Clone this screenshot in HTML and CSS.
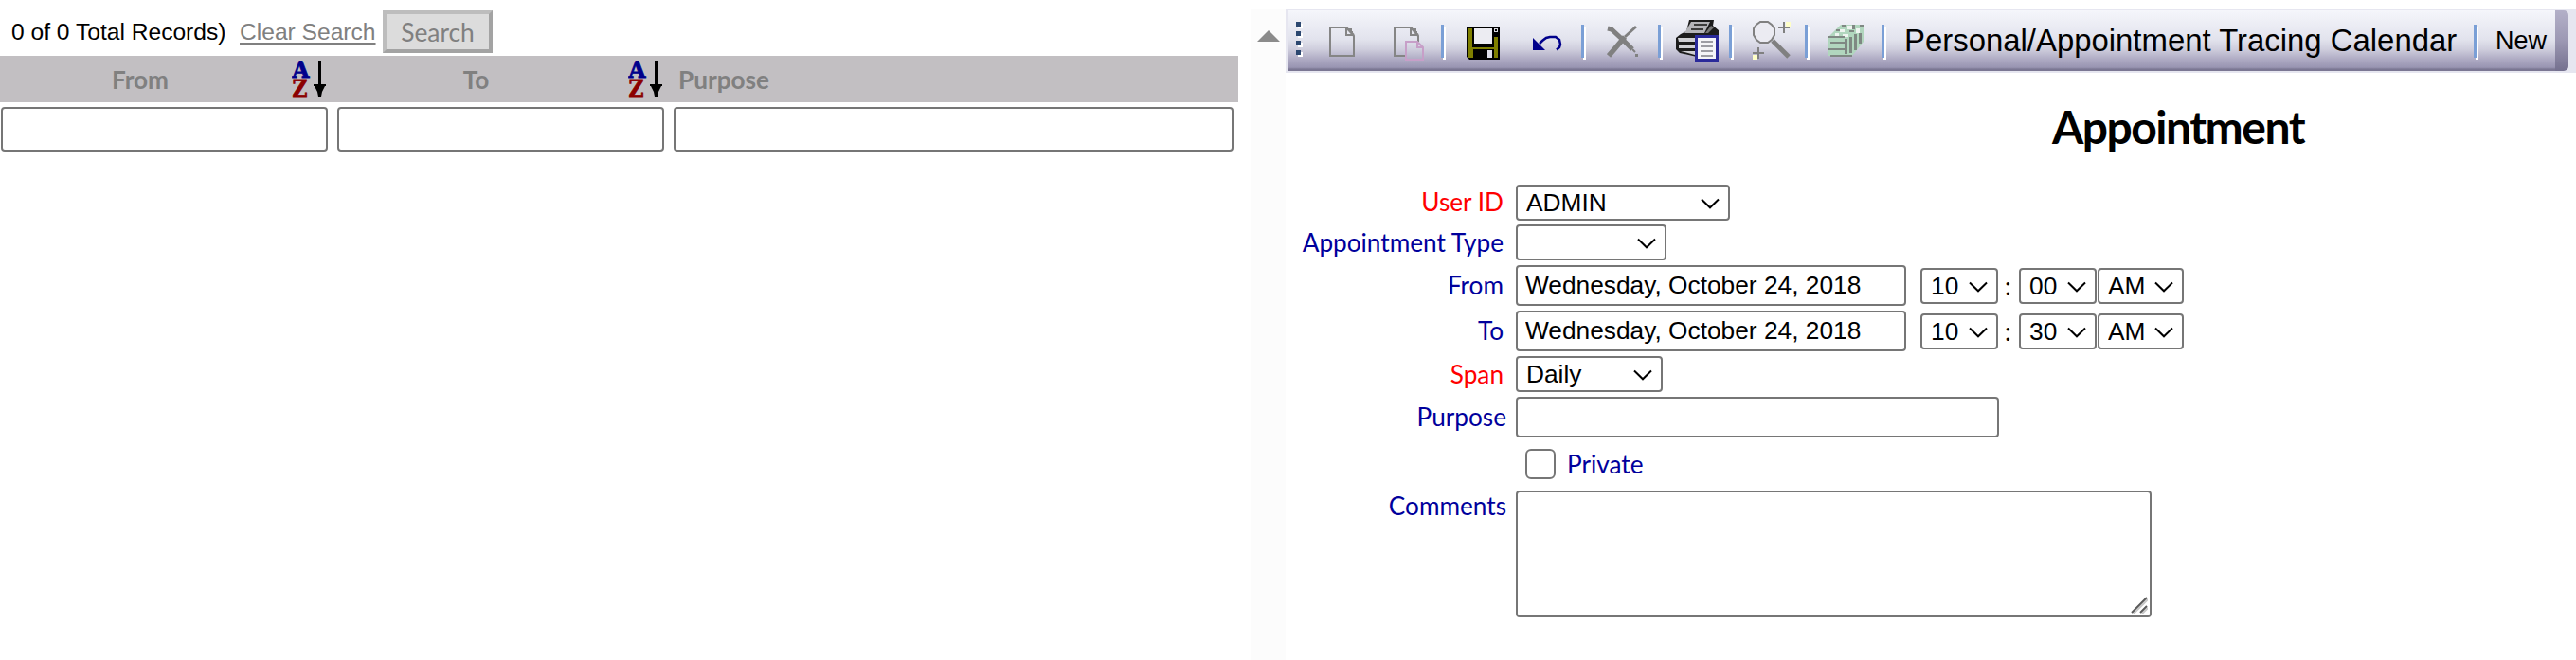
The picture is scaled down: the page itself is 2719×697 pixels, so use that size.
FILE: index.html
```html
<!DOCTYPE html>
<html lang="en">
<head>
  <meta charset="UTF-8" />
  <title>Appointment</title>
  <link rel="stylesheet" href="styles.css">
</head>
<body>
  <!-- Record list -->
  <div class="list">
    <div class="summary">
      <span class="total">0 of 0 Total Records)</span>
      <a class="clear" href="#">Clear Search</a>
      <button class="search">Search</button>
    </div>
    <div class="columns">
      <div class="column from">
        <span>From</span>
        <svg class="sort" viewBox="0 0 36 39">
          <text class="sort-a" x="0.5" y="18" textLength="18" lengthAdjust="spacingAndGlyphs">A</text>
          <text class="sort-z" x="0.5" y="38" textLength="16" lengthAdjust="spacingAndGlyphs">Z</text>
          <path d="M28 0h3v25h5v2h-1l-3 6-1 5h-3l-1-5-3-6h-1v-2h5z" />
        </svg>
      </div>
      <div class="column to">
        <span>To</span>
        <svg class="sort" viewBox="0 0 36 39">
          <text class="sort-a" x="0.5" y="18" textLength="18" lengthAdjust="spacingAndGlyphs">A</text>
          <text class="sort-z" x="0.5" y="38" textLength="16" lengthAdjust="spacingAndGlyphs">Z</text>
          <path d="M28 0h3v25h5v2h-1l-3 6-1 5h-3l-1-5-3-6h-1v-2h5z" />
        </svg>
      </div>
      <div class="column purpose"><span>Purpose</span></div>
    </div>
    <div class="filters">
      <input type="text" class="from" />
      <input type="text" class="to" />
      <input type="text" class="purpose" />
    </div>
  </div>

  <div class="scrollbar">
    <svg width="24" height="12" viewBox="0 0 24 12"><path d="M12 0l12 12H0z" fill="#8b8b8b" /></svg>
  </div>

  <!-- Appointment detail -->
  <div class="detail">
    <div class="toolbar">
      <div class="tools">
        <svg class="grip" width="8" height="44" viewBox="0 0 8 44">
          <path d="M2 4h5v5H2zM2 14h5v5H2zM2 24h5v5H2zM2 34h5v5H2z" fill="#fff" />
          <path d="M0 2h5v5H0zM0 12h5v5H0zM0 22h5v5H0zM0 32h5v5H0z" fill="#2c4870" />
        </svg>
        <svg class="new" width="27" height="44" viewBox="0 0 27 44" fill="none" stroke="#858585" stroke-width="2">
          <path d="M1 8h17l8 9v21H1z" />
          <path d="M18 8v8h8M18 8l8 8" />
          <path d="M20 10h3v3h2" />
        </svg>
        <svg class="copy" width="32" height="44" viewBox="0 0 32 44" fill="none" stroke="#858585" stroke-width="2">
          <path d="M13 38H1V8h17l8 9v6" />
          <path d="M18 8v8h8M18 8l8 8M20 10h3v3h2" />
          <path d="M13 23h12l6 6v13H13z" stroke="#c79fc8" />
          <path d="M25 23v6h6" stroke="#c79fc8" />
        </svg>
        <i class="sep after-copy"></i>
        <svg class="save" width="35" height="44" viewBox="0 0 35 44">
          <path d="M0 7h35v35H3l-3-3z" />
          <path d="M2 9h4v20h23V18h4v22h-4v-9H7v9H2z" fill="#808000" />
          <path d="M8 9h19v16H8z" fill="#ececf2" />
          <path d="M29 9h4v4h-4z" fill="#d6d6de" />
          <path d="M30 10h2v2h-2z" />
          <path d="M22 32h5v8h-5z" fill="#dedee8" />
        </svg>
        <svg class="undo" width="31" height="44" viewBox="0 0 31 44" fill="none" stroke="#00008b" stroke-width="2.5">
          <path d="M0 19v13h13z" fill="#00008b" stroke="none" />
          <path d="M7 25l3-3 4-3 4-1h6l4 3 1 5-1 3-3 2.5" />
        </svg>
        <i class="sep after-undo"></i>
        <svg class="delete" width="33" height="44" viewBox="0 0 33 44" fill="none" stroke="#808080">
          <path d="M1 9l4 1 14 13 8 8" stroke-width="5" />
          <path d="M27 31l3 3" stroke-width="2" />
          <path d="M31 7L19 18" stroke-width="3" />
          <path d="M19 18L8 31l-6 7" stroke-width="5.5" />
          <path d="M30 36h3v3h-3z" fill="#808080" stroke="none" />
        </svg>
        <i class="sep after-delete"></i>
        <svg class="print" width="45" height="44" viewBox="0 0 45 44">
          <path d="M14 0h26l-1 6 6 5v20L22 39 4 35l-4-4V19l5-4 6-3z" fill="#1c1c1c" />
          <path d="M16 2h20l-6 12H9z" fill="#b4b4b8" />
          <path d="M19 5h14M16 10h13" stroke="#3c3c3c" stroke-width="2" />
          <path d="M2 19h18v4H3zM3 26h17v4H3zM5 33h15v4z" fill="#cfcfd3" />
          <path d="M31 14l6-8 3 2-6 6z" fill="#777" />
          <path d="M21.5 17.5h22v25h-22z" fill="#f4f4f8" stroke="#2a2a9a" stroke-width="3" />
          <path d="M26 23h13M26 28h13M26 33h13M26 38h13" stroke="#9c9ca4" stroke-width="2" />
        </svg>
        <i class="sep after-print"></i>
        <svg class="find" width="40" height="44" viewBox="0 0 40 44" fill="none" stroke="#808080" stroke-width="2">
          <path d="M8 2h8l4 3 3 4v7l-3 5-4 3H8l-4-3-3-5V9l3-4z" fill="#ebebf2" />
          <path d="M21 22l17 17" stroke-width="5" />
          <path d="M33 2v12M27 8h12M6 29v12M0 35h12" />
          <path d="M35 2h5v5h-5zM0 37h5v5H0z" fill="#ffffc8" stroke="none" />
        </svg>
        <i class="sep after-find"></i>
        <svg class="money" width="37" height="44" viewBox="0 0 37 44">
          <path d="M0 18L13 5h24v18L25 38H0z" fill="#b1d6be" />
          <path d="M12 10h5v3h-5zM20 6h5v4h-5zM29 9h4v5h-4zM15 15h6v3h-6zM7 14h4v3H7z" fill="#eef4f0" />
          <path d="M0 17h17v2H0zM2 23h16v2H2zM0 30h17v2H0zM2 37h23v2H2zM17 20h3v16h-3zM22 18h3v17h-3zM27 15h3v17h-3zM32 14h3v11h-3zM8 10h4v2H8zM14 5h5v2h-5zM22 11h5v2h-5zM25 5h3v5h-3zM33 5h4v2h-4z" fill="#7f8883" />
        </svg>
        <i class="sep after-money"></i>
        <span class="caption">Personal/Appointment Tracing Calendar</span>
        <i class="sep"></i>
        <span class="mode">New</span>
      </div>
      <div class="cap"></div>
    </div>

    <h1>Appointment</h1>

    <form class="form">
      <label class="required">User ID</label>
      <div class="row">
        <div class="select user"><select><option>ADMIN</option></select><svg viewBox="0 0 20 12"><path d="M1 1.5l9 8.8 9-8.8" /></svg></div>
      </div>

      <label>Appointment Type</label>
      <div class="row">
        <div class="select type"><select><option></option></select><svg viewBox="0 0 20 12"><path d="M1 1.5l9 8.8 9-8.8" /></svg></div>
      </div>

      <label>From</label>
      <div class="row">
        <input type="text" class="date" value="Wednesday, October 24, 2018" />
        <div class="select hour"><select><option>10</option></select><svg viewBox="0 0 20 12"><path d="M1 1.5l9 8.8 9-8.8" /></svg></div>
        <span class="colon">:</span>
        <div class="select minute"><select><option>00</option></select><svg viewBox="0 0 20 12"><path d="M1 1.5l9 8.8 9-8.8" /></svg></div>
        <div class="select ampm"><select><option>AM</option></select><svg viewBox="0 0 20 12"><path d="M1 1.5l9 8.8 9-8.8" /></svg></div>
      </div>

      <label>To</label>
      <div class="row">
        <input type="text" class="date" value="Wednesday, October 24, 2018" />
        <div class="select hour"><select><option>10</option></select><svg viewBox="0 0 20 12"><path d="M1 1.5l9 8.8 9-8.8" /></svg></div>
        <span class="colon">:</span>
        <div class="select minute"><select><option>30</option></select><svg viewBox="0 0 20 12"><path d="M1 1.5l9 8.8 9-8.8" /></svg></div>
        <div class="select ampm"><select><option>AM</option></select><svg viewBox="0 0 20 12"><path d="M1 1.5l9 8.8 9-8.8" /></svg></div>
      </div>

      <label class="required">Span</label>
      <div class="row">
        <div class="select span"><select><option>Daily</option></select><svg viewBox="0 0 20 12"><path d="M1 1.5l9 8.8 9-8.8" /></svg></div>
      </div>

      <label class="wide">Purpose</label>
      <div class="row">
        <input type="text" class="subject" />
      </div>

      <span></span>
      <div class="row private">
        <input type="checkbox" id="private" />
        <label for="private">Private</label>
      </div>

      <label class="wide top">Comments</label>
      <div class="row comments">
        <textarea></textarea>
        <svg class="resize" width="18" height="18" viewBox="0 0 18 18" fill="none">
          <path d="M3 18L18 3M12 18l6-6" stroke="#c8c8c8" stroke-width="2" />
          <path d="M1 17L17 1M10 17l7-7" stroke="#5a5a5a" stroke-width="2" />
        </svg>
      </div>
    </form>
  </div>
</body>
</html>
```
FILE: styles.css
```css
* {
  box-sizing: border-box;
}
body {
  display: flex;
  height: 697px;
  margin: 0;
  overflow: hidden;
  background: #fff;
  font-family: Lato, sans-serif;
  font-size: 26.2px;
  color: #000;
}
svg {
  display: block;
  flex: none;
}
input[type="text"], select, textarea {
  display: block;
  margin: 0;
  padding: 0 8px;
  border: 2px solid #767676;
  border-radius: 4px;
  background: #fff;
  color: #000;
  font-family: "Liberation Sans", Arial, sans-serif;
  font-size: 26.3px;
}

/* Record list */
.list {
  width: 1320px;
  padding-top: 11px;
}
.summary {
  display: flex;
  align-items: center;
  height: 48px;
  padding: 0 0 3px 12px;
  font-family: "Liberation Sans", Arial, sans-serif;
  font-size: 24.6px;
  white-space: nowrap;
}
.total {
  width: 241px;
}
.clear {
  width: 143px;
  color: #808080;
  text-decoration-thickness: 2px;
  text-underline-offset: 3px;
}
.search {
  width: 116px;
  height: 45px;
  margin-left: 8px;
  padding: 0;
  border: 4px solid;
  border-color: #bdbdbd #a3a3a3 #a3a3a3 #bdbdbd;
  background: #dcdcdc;
  color: #808080;
  font-family: Lato, sans-serif;
  font-size: 26.4px;
}
.columns {
  display: flex;
  align-items: center;
  width: 1307px;
  height: 49px;
  background: #c2bfc2;
  color: #808080;
  font-weight: bold;
}
.column {
  display: flex;
  align-items: center;
}
.column.from {
  width: 354px;
}
.column.to {
  width: 355px;
}
.column span {
  flex: 1;
  text-align: center;
}
.column.from span {
  padding-right: 12px;
}
.column.to span {
  padding-right: 12px;
}
.column .sort {
  width: 36px;
  height: 39px;
  margin-right: 10px;
}
.column.purpose {
  padding-left: 7px;
}
.sort-a, .sort-z {
  font-family: "DejaVu Serif", serif;
  font-size: 24.5px;
  font-weight: bold;
  stroke-width: 0.8px;
}
.sort-a {
  fill: #00008b;
  stroke: #00008b;
}
.sort-z {
  fill: #8b0000;
  stroke: #8b0000;
}
.filters {
  display: flex;
  gap: 10px;
  padding: 5px 0 0 1px;
}
.filters input {
  width: 345px;
  height: 47px;
}
.filters input.purpose {
  width: 591px;
}

.scrollbar {
  width: 37px;
  margin-top: 9px;
  padding: 23px 0 0 7px;
  background: #fcfcfc;
}

/* Toolbar */
.detail {
  width: 1362px;
  padding-top: 9px;
}
.toolbar {
  display: flex;
  height: 68px;
  padding: 2px 8px 2px 2px;
  background: #e6e6f0;
}
.tools {
  display: flex;
  align-items: center;
  width: 1338px;
  padding-left: 9px;
  background: linear-gradient(#f5f6fb 0%, #e2e3ed 48%, #cfcedd 64%, #aaa6c0 83%, #9995b2 94%, #7b7793 97%, #7b7793 100%);
  font-family: "Liberation Sans", Arial, sans-serif;
  white-space: nowrap;
}
.cap {
  width: 14px;
  border-radius: 0 5px 5px 0;
  background: linear-gradient(#b3b0c8, #9c98b3 50%, #74708e);
}
.new { margin-left: 27px; }
.copy { margin-left: 41px; }
.save { margin-left: 22px; }
.undo { margin-left: 35px; }
.delete { margin-left: 22px; }
.print { margin-left: 14px; }
.find { margin-left: 20px; }
.money { margin-left: 20px; }
.sep {
  flex: none;
  width: 3px;
  height: 35px;
  margin-right: 2px;
  background: #7a9fd6;
  box-shadow: 2px 2px 0 #fff;
}
.after-copy { margin-left: 18px; }
.after-undo { margin-left: 20px; }
.after-delete { margin-left: 21px; }
.after-print { margin-left: 11px; }
.after-find { margin-left: 15px; }
.after-money { margin-left: 19px; }
.caption {
  width: 601px;
  margin-left: 19px;
  font-size: 32.9px;
}
.mode {
  margin-left: 18px;
  font-size: 27px;
}

h1 {
  width: 530px;
  margin: 28px 0 0 677px;
  font-size: 48px;
  letter-spacing: -1.5px;
  line-height: 58px;
  text-align: center;
}

/* Form */
.form {
  display: grid;
  grid-template-columns: 233px 1fr;
  column-gap: 10px;
  margin-top: 32px;
}
.form label {
  align-self: center;
  padding-right: 3px;
  color: #00009c;
  line-height: 32px;
  text-align: right;
  white-space: nowrap;
  margin-bottom: 6px;
}
.form label.required {
  color: #f00;
}
.form label.wide {
  padding-right: 0;
}
.form label.top {
  align-self: start;
}
.row {
  display: flex;
  align-items: center;
  margin-bottom: 5px;
}
.select {
  position: relative;
}
.select select {
  width: 100%;
  height: 38px;
  padding: 0 9px;
  appearance: none;
}
.select svg {
  position: absolute;
  top: 14px;
  right: 11px;
  width: 20px;
  height: 12px;
  fill: none;
  stroke: #000;
  stroke-width: 2px;
  pointer-events: none;
}
.user { width: 226px; margin-bottom: -1px; }
.type { width: 159px; }
.hour { width: 82px; margin-left: 15px; }
.minute { width: 82px; }
.ampm { width: 91px; margin-left: 1px; }
.span { width: 155px; }
.date {
  width: 412px;
  height: 43px;
}
.colon {
  width: 22px;
  padding-left: 7px;
}
.subject {
  width: 510px;
  height: 43px;
}
.private {
  height: 32px;
  margin: 7px 0 12px;
  padding-left: 10px;
}
.private input {
  width: 32px;
  height: 32px;
  margin: 0 12px 0 0;
  border: 2px solid #767676;
  border-radius: 6px;
  appearance: none;
}
.form .private label {
  margin: 0;
}
.comments {
  position: relative;
  width: 671px;
}
.comments textarea {
  width: 671px;
  height: 134px;
  resize: none;
}
.resize {
  position: absolute;
  right: 4px;
  bottom: 4px;
}
```
